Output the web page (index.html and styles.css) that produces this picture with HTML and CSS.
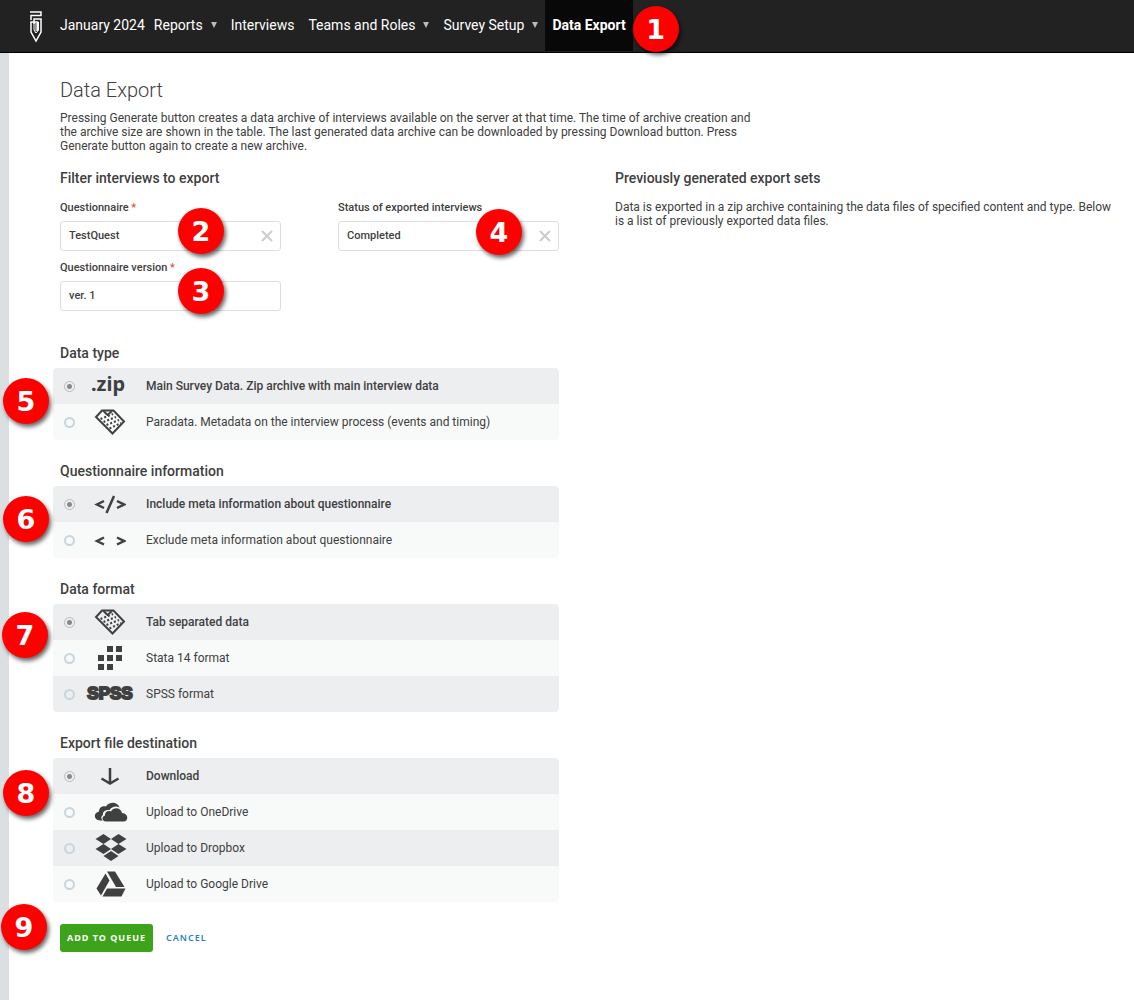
FILE: index.html
```html
<!DOCTYPE html>
<html lang="en">
<head>
<meta charset="utf-8">
<title>Data Export</title>
<meta name="viewport" content="width=device-width, initial-scale=1">
<link rel="stylesheet" href="styles.css">
</head>
<body>
<svg class="sprite" aria-hidden="true">
  <symbol id="tab" viewBox="0 0 32 26">
    <path d="M8 1.500H19.500L30 12.500 18.500 24.500 2 8Z" fill="none" stroke="#404040" stroke-width="2"/>
    <path d="M9.500 2 13.500 6 18 2" fill="none" stroke="#404040" stroke-width="2"/>
    <path d="M6.500 10 19 5M9.500 13 22 8M12.500 16 25 11M15.500 19.500 27 14" fill="none" stroke="#404040" stroke-width="2" stroke-dasharray="2 2"/>
  </symbol>
</svg>
<header class="topbar">
  <a class="brand" href="#" aria-label="Home">
    <svg width="12" height="32" viewBox="0 0 12 32" fill="none" stroke="#fff">
      <path d="M0 1H11V4.500H1V9M4 13V8H11V21L6 30 1 21V11H7.500V20" stroke-width="1.500"/>
      <path d="M4 12V19L6 22 8.500 19V11M6 12V20" stroke-width="1"/>
    </svg>
  </a>
  <nav class="nav">
    <a class="workspace" href="#">January 2024</a>
    <a href="#">Reports <span class="caret"></span></a>
    <a href="#">Interviews</a>
    <a href="#">Teams and Roles <span class="caret"></span></a>
    <a href="#">Survey Setup <span class="caret"></span></a>
    <a class="active" href="#">Data Export<span class="badge badge-nav">1</span></a>
  </nav>
</header>
<main class="page">
  <h1>Data Export</h1>
  <p class="intro">Pressing Generate button creates a data archive of interviews available on the server at that time. The time of archive creation and the archive size are shown in the table. The last generated data archive can be downloaded by pressing Download button. Press Generate button again to create a new archive.</p>
  <div class="columns">
    <form class="export">
      <h2>Filter interviews to export</h2>
      <div class="filters">
        <div class="field">
          <label for="quest">Questionnaire <span class="req">*</span></label>
          <div class="control">
            <input id="quest" type="text" value="TestQuest">
            <button class="clear" type="button" aria-label="Clear questionnaire"><svg width="12" height="12" viewBox="0 0 12 12"><path d="M1 1 11 11M11 1 1 11"/></svg></button>
            <span class="badge badge-field">2</span>
          </div>
        </div>
        <div class="field">
          <label for="status">Status of exported interviews</label>
          <div class="control">
            <input id="status" type="text" value="Completed">
            <button class="clear" type="button" aria-label="Clear status"><svg width="12" height="12" viewBox="0 0 12 12"><path d="M1 1 11 11M11 1 1 11"/></svg></button>
            <span class="badge badge-status">4</span>
          </div>
        </div>
        <div class="field">
          <label for="version">Questionnaire version <span class="req">*</span></label>
          <div class="control">
            <input id="version" type="text" value="ver. 1">
            <span class="badge badge-field">3</span>
          </div>
        </div>
      </div>

      <section class="group">
        <h2>Data type</h2>
        <div class="options">
          <label class="option"><input type="radio" name="type" checked><span class="icon zip">.zip</span><span class="text">Main Survey Data. Zip archive with main interview data</span></label>
          <label class="option"><input type="radio" name="type"><span class="icon"><svg width="32" height="26"><use href="#tab"/></svg></span><span class="text">Paradata. Metadata on the interview process (events and timing)</span></label>
          <span class="badge badge-list">5</span>
        </div>
      </section>

      <section class="group">
        <h2>Questionnaire information</h2>
        <div class="options">
          <label class="option"><input type="radio" name="meta" checked><span class="icon"><svg width="32" height="20" viewBox="0 0 32 20" fill="none" stroke="#404040" stroke-width="2.500"><path d="M10 7 3 10.500 10 14M23 7 30 10.500 23 14M20 2 12.500 19"/></svg></span><span class="text">Include meta information about questionnaire</span></label>
          <label class="option"><input type="radio" name="meta"><span class="icon"><svg width="32" height="20" viewBox="0 0 32 20" fill="none" stroke="#404040" stroke-width="2.500"><path d="M10 7.500 3 11 10 14.500M23 7.500 30 11 23 14.500"/></svg></span><span class="text">Exclude meta information about questionnaire</span></label>
          <span class="badge badge-list">6</span>
        </div>
      </section>

      <section class="group">
        <h2>Data format</h2>
        <div class="options">
          <label class="option"><input type="radio" name="format" checked><span class="icon"><svg width="32" height="26"><use href="#tab"/></svg></span><span class="text">Tab separated data</span></label>
          <label class="option"><input type="radio" name="format"><span class="icon"><svg width="26" height="26" viewBox="0 0 26 26" fill="#404040"><path d="M10 1h6v6h-6zM19 1h6v6h-6zM1 10h6v6h-6zM10 10h6v6h-6zM19 10h6v6h-6zM1 19h6v6h-6zM10 19h6v6h-6z"/></svg></span><span class="text">Stata 14 format</span></label>
          <label class="option"><input type="radio" name="format"><span class="icon spss">SPSS</span><span class="text">SPSS format</span></label>
          <span class="badge badge-list badge-format">7</span>
        </div>
      </section>

      <section class="group">
        <h2>Export file destination</h2>
        <div class="options">
          <label class="option"><input type="radio" name="dest" checked><span class="icon"><svg width="20" height="20" viewBox="0 0 20 20" fill="none" stroke="#404040" stroke-width="2.500"><path d="M10 2V17M1.500 12.500 10 17.500 18.500 12.500"/></svg></span><span class="text">Download</span></label>
          <label class="option"><input type="radio" name="dest"><span class="icon shift"><svg width="34" height="22" viewBox="0 0 34 22" fill="#404040"><path d="M9 19.500H6C-1 19-.5 11.500 5 10.500 5 6 9 4.500 12 5.500 15 .5 23.500 .5 25.500 6.500 22 4.500 17.500 6 15.500 9 10 8.500 8.500 12 9 14 6.500 15.500 7 18.500 9 19.500Z"/><path d="M12 20.500C7.500 20 7.500 15.500 11 14.500 10.500 11 14 9 17 10.500 19.500 5.500 27 6.500 28 12 35 12.500 34.500 20.500 29.500 20.500Z"/></svg></span><span class="text">Upload to OneDrive</span></label>
          <label class="option"><input type="radio" name="dest"><span class="icon shift"><svg width="32" height="28" viewBox="0 0 32 28" fill="#404040"><path d="M8.500 0 16 5 8.500 10 .5 5ZM23.500 0 31.500 5 23.500 10 16 5ZM8.500 10 16 15 8.500 20 .5 15ZM23.500 10 31.500 15 23.500 20 16 15ZM16 17 23.500 22 16 27 8.500 22Z"/></svg></span><span class="text">Upload to Dropbox</span></label>
          <label class="option"><input type="radio" name="dest"><span class="icon shift"><svg width="30" height="26" viewBox="0 0 30 26" fill="#404040"><path d="M11 .5H19L28.500 16H20ZM9.500 2.500 13.500 9.500 5 24.500.5 17.500ZM11 17.500H29.500L25.500 25.500H6.500Z"/></svg></span><span class="text">Upload to Google Drive</span></label>
          <span class="badge badge-list badge-dest">8</span>
        </div>
      </section>

      <div class="actions">
        <button class="submit" type="submit">Add to queue</button>
        <a class="cancel" href="#">Cancel</a>
        <span class="badge badge-actions">9</span>
      </div>
    </form>
    <section class="history">
      <h2>Previously generated export sets</h2>
      <p>Data is exported in a zip archive containing the data files of specified content and type. Below is a list of previously exported data files.</p>
    </section>
  </div>
</main>
</body>
</html>
```
FILE: styles.css
```css
* { box-sizing: border-box; }
body {
  margin: 0;
  display: flex;
  flex-direction: column;
  min-height: 100vh;
  background: #fff;
  color: #404040;
  font: 12px/14px Roboto, "Liberation Sans", sans-serif;
}
h1, h2, p { margin: 0; }
a { text-decoration: none; }
.sprite { position: absolute; width: 0; height: 0; }

.topbar {
  display: flex;
  height: 53px;
  padding-left: 30px;
  background: #222;
  border-bottom: 1px solid #000;
}
.brand { width: 23px; padding-top: 11px; }
.nav { display: flex; height: 51px; }
.nav a {
  display: flex;
  align-items: center;
  gap: 8px;
  padding: 0 7px 2px;
  color: #fff;
  font-size: 14px;
  white-space: nowrap;
}
.nav .workspace { padding-right: 2px; }
.nav .active { position: relative; background: #080808; font-weight: 700; }
.caret {
  border: solid transparent;
  border-width: 6px 3px 0;
  border-top-color: #bbb;
}

.page {
  flex: 1;
  padding: 25px 20px 40px 51px;
  border-left: 9px solid #dbdfe2;
}
h1 { font-size: 20px; line-height: 24px; font-weight: 300; }
.intro { max-width: 710px; margin-top: 9px; }
h2 { font-size: 14px; line-height: 20px; font-weight: 500; }
.columns {
  display: grid;
  grid-template-columns: 1fr 1fr;
  gap: 56px;
  margin-top: 15px;
}
.history p { margin-top: 12px; }

.filters {
  display: grid;
  grid-template-columns: 1fr 1fr;
  gap: 10px 57px;
  margin: 13px 0 32px;
}
.field > label { display: block; margin-bottom: 6px; font-size: 11px; font-weight: 500; }
.req { color: #e74c3c; }
.control { position: relative; display: flex; align-items: center; }
.control input {
  width: 100%;
  height: 30px;
  padding: 0 32px 2px 8px;
  border: 1px solid #dbdfe2;
  border-radius: 3px;
  background: #fff;
  color: #404040;
  font: 500 11px/14px Roboto, "Liberation Sans", sans-serif;
}
.clear {
  display: flex;
  margin-left: -20px;
  padding: 0;
  border: 0;
  background: none;
}
.clear path { stroke: #ccc; stroke-width: 2; }

.group + .group { margin-top: 21px; }
.options {
  position: relative;
  margin: 5px 0 0 -7px;
}
.option {
  display: flex;
  align-items: center;
  height: 36px;
  padding-left: 11px;
  background: #edeef0;
}
.option:nth-of-type(even) { background: #f8faf9; }
.option:first-of-type { border-radius: 4px 4px 0 0; }
.option:last-of-type { border-radius: 0 0 4px 4px; }
.option input {
  appearance: none;
  flex: none;
  width: 11px;
  height: 11px;
  margin: 0;
  border: 2px solid #c8d5dd;
  border-radius: 50%;
}
.option input:checked {
  border: 1px solid #bbb;
  background: radial-gradient(circle, #888 0 2px, transparent 3px);
}
.icon {
  display: flex;
  justify-content: center;
  flex: none;
  width: 50px;
  margin: 0 11px 0 10px;
}
.shift { padding-left: 2px; }
.zip { font: 700 20px/24px "Noto Sans", sans-serif; height: 28px; padding-right: 4px; }
.spss { font: 700 17px/20px "Liberation Sans", sans-serif; -webkit-text-stroke: 2px #404040; }
input:checked ~ .text { font-weight: 500; }

.actions {
  position: relative;
  display: flex;
  align-items: center;
  gap: 13px;
  margin-top: 22px;
}
.submit, .cancel {
  font: 700 9px/14px "Noto Sans", sans-serif;
  letter-spacing: 1px;
  text-transform: uppercase;
}
.submit {
  height: 28px;
  padding: 0 7px;
  border: 0;
  border-radius: 3px;
  background: #3ca31b;
  color: #fff;
}
.cancel { color: #2a81cb; font-weight: 600; }

.badge {
  position: absolute;
  z-index: 1;
  width: 46px;
  height: 46px;
  border-radius: 50%;
  background: #f00;
  box-shadow: 2px 3px 4px rgba(0, 0, 0, .6);
  color: #fff;
  font: 700 27px/48px "DejaVu Sans", sans-serif;
  text-align: center;
}
.badge-nav { left: 100%; top: 6px; }
.badge-field { left: 118px; top: -13px; }
.badge-status { left: 138px; top: -12px; }
.badge-list { left: -50px; top: 10px; }
.badge-format { left: -51px; top: 8px; }
.badge-dest { top: 12px; }
.badge-actions { left: -59px; top: -20px; }
```
